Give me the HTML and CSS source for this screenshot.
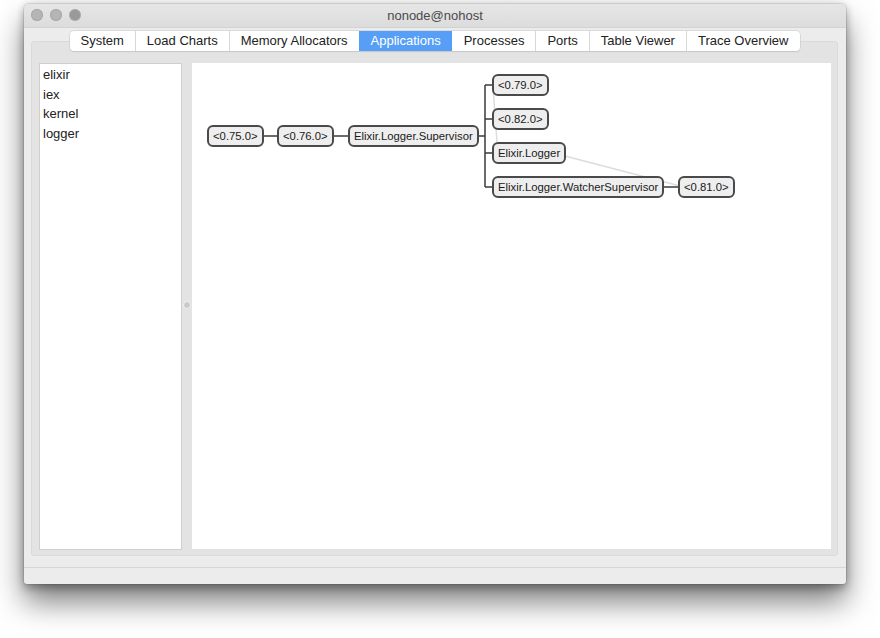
FILE: index.html
```html
<!DOCTYPE html>
<html>
<head>
<meta charset="utf-8">
<link rel="stylesheet" href="styles.css">
</head>
<body>
<div class="window">
  <div class="titlebar">
    <div class="lights">
      <span class="light"></span>
      <span class="light"></span>
      <span class="light light-full"></span>
    </div>
    <div class="title">nonode@nohost</div>
  </div>
  <div class="content">
    <div class="tabpanel">
      <div class="tabs">
        <div class="tab">System</div>
        <div class="tab">Load Charts</div>
        <div class="tab">Memory Allocators</div>
        <div class="tab active">Applications</div>
        <div class="tab">Processes</div>
        <div class="tab">Ports</div>
        <div class="tab">Table Viewer</div>
        <div class="tab">Trace Overview</div>
      </div>
      <div class="split">
        <div class="applist">
          <div class="app">elixir</div>
          <div class="app">iex</div>
          <div class="app">kernel</div>
          <div class="app">logger</div>
        </div>
        <div class="splitter"><span class="handle"></span></div>
        <div class="canvas">
          <svg class="links" width="639" height="486">
            <g stroke="#dcdcdc" stroke-width="1.5" fill="none">
              <line x1="301" y1="25" x2="305" y2="79"/>
              <line x1="373" y1="93" x2="488" y2="123"/>
            </g>
            <g stroke="#3a3a3a" stroke-width="1.5" fill="none">
              <line x1="71" y1="73" x2="85" y2="73"/>
              <line x1="141" y1="73" x2="156" y2="73"/>
              <line x1="286" y1="73" x2="293" y2="73"/>
              <line x1="293" y1="22" x2="293" y2="124"/>
              <line x1="293" y1="22" x2="300" y2="22"/>
              <line x1="293" y1="56" x2="300" y2="56"/>
              <line x1="293" y1="90" x2="300" y2="90"/>
              <line x1="293" y1="124" x2="300" y2="124"/>
              <line x1="471" y1="124" x2="486" y2="124"/>
            </g>
          </svg>
          <div class="node" style="left:15px;top:62px">&lt;0.75.0&gt;</div>
          <div class="node" style="left:85px;top:62px">&lt;0.76.0&gt;</div>
          <div class="node" style="left:156px;top:62px">Elixir.Logger.Supervisor</div>
          <div class="node" style="left:300px;top:11px">&lt;0.79.0&gt;</div>
          <div class="node" style="left:300px;top:45px">&lt;0.82.0&gt;</div>
          <div class="node" style="left:300px;top:79px">Elixir.Logger</div>
          <div class="node" style="left:300px;top:113px">Elixir.Logger.WatcherSupervisor</div>
          <div class="node" style="left:486px;top:113px">&lt;0.81.0&gt;</div>
        </div>
      </div>
    </div>
    <div class="statusbar"></div>
  </div>
</div>
</body>
</html>
```
FILE: styles.css
```css
html, body {
  margin: 0;
  padding: 0;
  background: #ffffff;
}
body {
  min-height: 638px;
  box-sizing: border-box;
  padding: 4px 0 0 24px;
  font-family: "Liberation Sans", Arial, sans-serif;
}
.window {
  width: 822px;
  height: 580px;
  background: #ececec;
  border-radius: 5px 5px 3px 3px;
  box-shadow: 0 18px 30px rgba(0,0,0,0.5), 0 5px 8px rgba(0,0,0,0.22), 0 0 8px rgba(0,0,0,0.15), 0 0 0 1px rgba(0,0,0,0.08);
  display: flex;
  flex-direction: column;
  overflow: hidden;
}
.titlebar {
  height: 23px;
  flex: none;
  background: linear-gradient(#e6e6e6, #dcdcdc);
  border-bottom: 1px solid #d2d2d2;
  display: flex;
  align-items: center;
  position: relative;
}
.lights {
  display: flex;
  gap: 7px;
  padding-left: 7px;
  position: absolute;
  left: 0;
  top: 5px;
}
.light {
  width: 12px;
  height: 12px;
  border-radius: 50%;
  background: #b5b5b5;
  box-shadow: inset 0 0 0 1px #a9a9a9;
}
.light-full {
  background: radial-gradient(circle, #8a8a8a 0.6px, transparent 0.9px) 0 0 / 2px 2px, #b5b5b5;
}
.title {
  flex: 1;
  text-align: center;
  font-size: 13px;
  color: #4a4a4a;
  line-height: 23px;
}
.content {
  flex: 1;
  display: flex;
  flex-direction: column;
  padding: 3px 8px 0 7px;
}
.tabpanel {
  height: 525px;
  display: flex;
  flex-direction: column;
  position: relative;
}
.tabpanel::before {
  content: "";
  position: absolute;
  left: 0;
  right: 0;
  top: 10px;
  bottom: 0;
  background: #e3e3e3;
  border: 1px solid #dadada;
  border-radius: 3px;
}
.tabs {
  position: relative;
  align-self: center;
  display: flex;
  height: 20px;
  background: #ffffff;
  border-radius: 4px;
  box-shadow: 0 0 0 0.5px #c8c8c8, 0 1px 1px rgba(0,0,0,0.12);
}
.tab {
  font-size: 13px;
  color: #222222;
  line-height: 20px;
  padding: 0 11px;
  border-left: 1px solid #d8d8d8;
}
.tab:first-child {
  border-left: none;
  border-radius: 4px 0 0 4px;
}
.tab:last-child {
  border-radius: 0 4px 4px 0;
}
.tab.active {
  background: #579ff6;
  color: #ffffff;
  border-left-color: #579ff6;
}
.tab.active + .tab {
  border-left-color: transparent;
}
.split {
  position: relative;
  flex: 1;
  display: flex;
  padding: 12px 7px 7px 8px;
}
.applist {
  width: 141px;
  background: #ffffff;
  border: 1px solid #cfcfcf;
  padding-top: 1px;
  margin-bottom: -1px;
}
.app {
  font-size: 13px;
  color: #222222;
  line-height: 19.5px;
  padding-left: 3px;
}
.splitter {
  width: 10px;
  display: flex;
  align-items: center;
  justify-content: center;
}
.handle {
  width: 6px;
  height: 6px;
  border-radius: 50%;
  background: #c9c9c9;
  border: 1px solid #f2f2f2;
  margin-top: -2px;
}
.canvas {
  flex: 1;
  background: #ffffff;
  position: relative;
}
.links {
  position: absolute;
  left: 0;
  top: 0;
}
.node {
  position: absolute;
  height: 22px;
  box-sizing: border-box;
  border: 2px solid #4a4a4a;
  border-radius: 6px;
  background: #eeeeee;
  font-size: 11.3px;
  line-height: 18px;
  color: #1a1a1a;
  padding: 0 4px;
  white-space: nowrap;
}
.statusbar {
  height: 16px;
  margin: 11px -8px 0 -7px;
  border-top: 1px solid #d6d6d6;
}
```
